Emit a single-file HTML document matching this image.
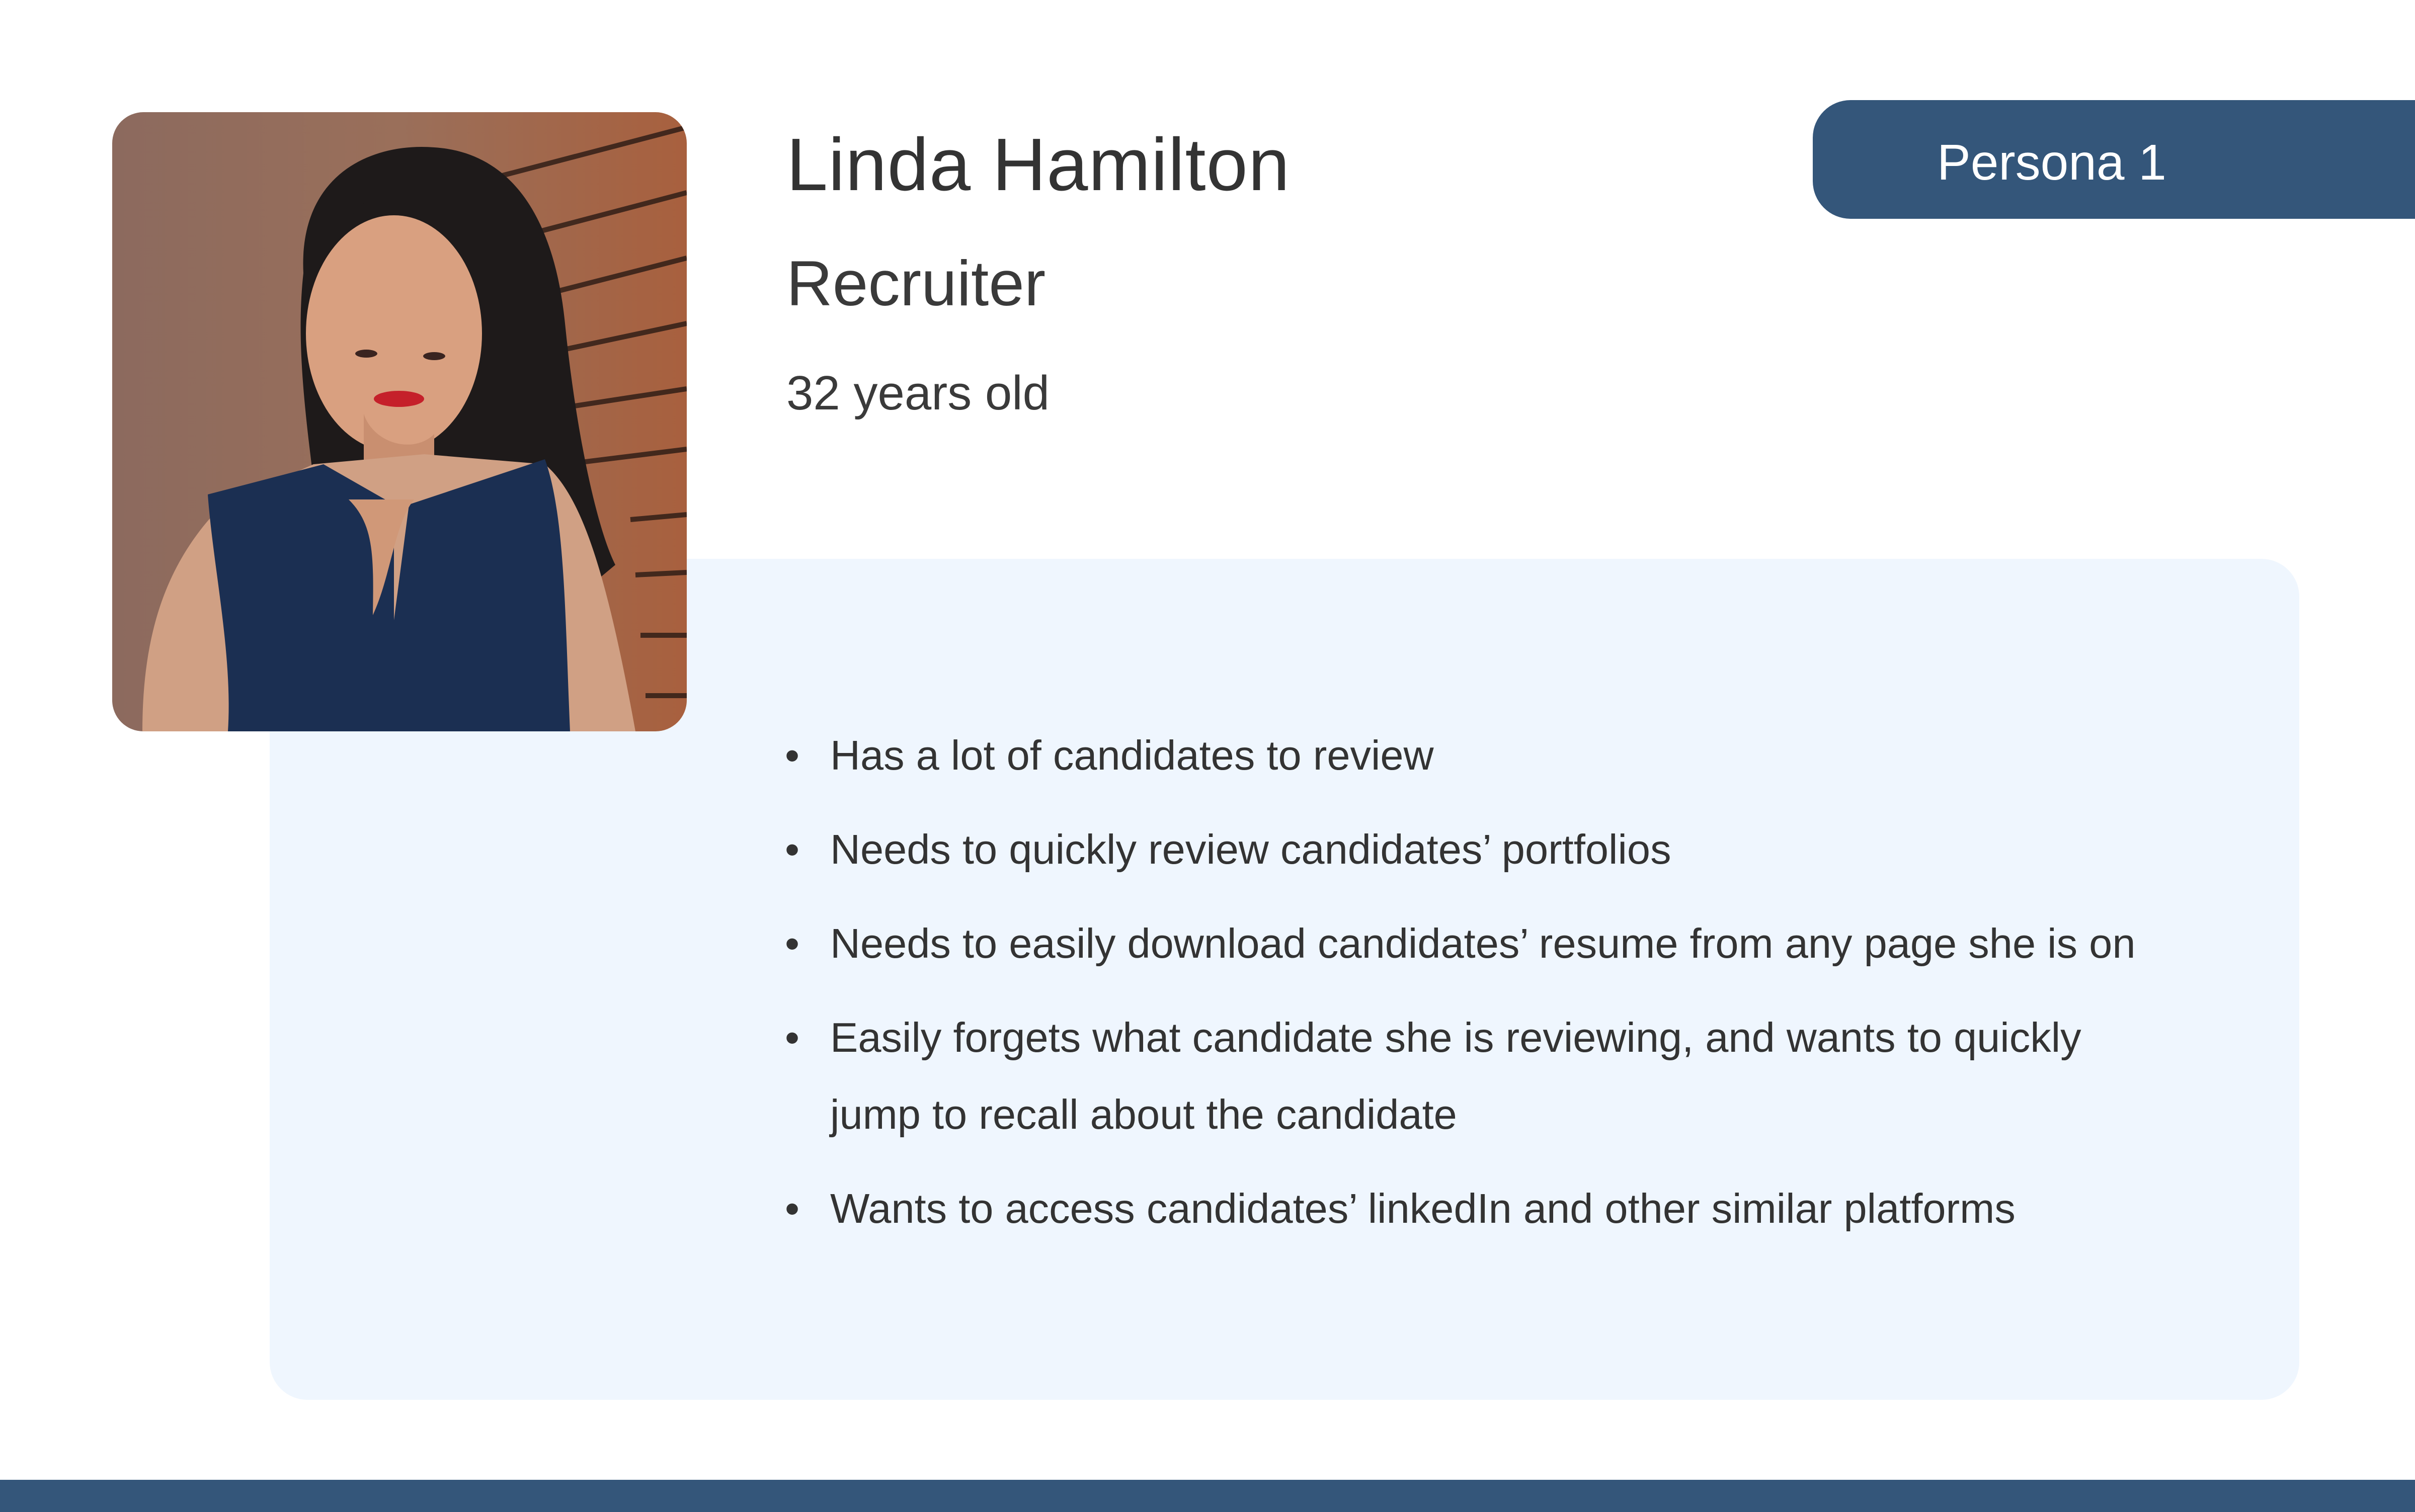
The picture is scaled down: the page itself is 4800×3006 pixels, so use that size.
<!DOCTYPE html>
<html><head><meta charset="utf-8"><style>
html,body{margin:0;padding:0;}
body{width:4800px;height:3006px;background:#fff;position:relative;overflow:hidden;font-family:"Liberation Sans",sans-serif;color:#333;}
.box{position:absolute;left:536px;top:1111px;width:4034px;height:1672px;background:#eff6fe;border-radius:75px;}
.photo{position:absolute;left:223px;top:223px;width:1142px;height:1231px;border-radius:62px;overflow:hidden;}
.name{position:absolute;left:1563px;top:254px;font-size:148px;line-height:1;color:#333;letter-spacing:1px;}
.role{position:absolute;left:1563px;top:500px;font-size:127px;line-height:1;color:#3a3a3a;}
.age{position:absolute;left:1563px;top:734px;font-size:96px;line-height:1;color:#3a3a3a;}
.badge{position:absolute;left:3603px;top:199px;width:1197px;height:236px;background:#34567a;border-radius:75px 0 0 75px;color:#fff;font-size:100px;line-height:248px;text-indent:247px;}
ul{position:absolute;left:1560px;top:1425px;margin:0;padding:0;list-style:none;font-size:83px;color:#333;}
li{position:relative;padding-left:90px;line-height:153px;white-space:nowrap;margin-bottom:34px;}
li:before{content:"•";position:absolute;left:0;top:0;}
.bar{position:absolute;left:0;top:2942px;width:4800px;height:64px;background:#34567a;}
</style></head><body>
<div class="box"></div>
<div class="photo">
<svg width="1142" height="1231" viewBox="0 0 1142 1231">
<defs>
<linearGradient id="bg" x1="0" y1="0" x2="1" y2="0">
<stop offset="0" stop-color="#8c6a5e"/><stop offset="0.5" stop-color="#9a6f5a"/><stop offset="1" stop-color="#a8603e"/>
</linearGradient>
</defs>
<rect width="1142" height="1231" fill="url(#bg)"/>
<g stroke="#2a1a14" stroke-width="10" opacity="0.8">
<line x1="760" y1="130" x2="1142" y2="30"/><line x1="800" y1="250" x2="1142" y2="160"/>
<line x1="830" y1="370" x2="1142" y2="290"/><line x1="860" y1="480" x2="1142" y2="420"/>
<line x1="880" y1="590" x2="1142" y2="550"/><line x1="900" y1="700" x2="1142" y2="670"/>
<line x1="1030" y1="810" x2="1142" y2="800"/><line x1="1040" y1="920" x2="1142" y2="915"/>
<line x1="1050" y1="1040" x2="1142" y2="1040"/><line x1="1060" y1="1160" x2="1142" y2="1160"/>
</g>
<path d="M380 320 C370 120 520 60 640 70 C800 80 880 220 900 420 C920 620 960 820 1000 900 L880 1000 L420 900 C400 700 360 500 380 320Z" fill="#1e1a1a"/>
<ellipse cx="560" cy="440" rx="175" ry="235" fill="#d9a080"/>
<path d="M430 280 C470 200 600 150 730 260 L720 180 C640 110 500 120 430 280Z" fill="#1e1a1a"/>
<path d="M500 600 C520 660 600 680 640 640 L640 760 L500 760Z" fill="#c98f70"/>
<path d="M60 1231 C60 1050 100 900 220 780 L400 700 L620 680 L860 700 C930 760 980 900 1040 1231Z" fill="#d0a084"/>
<path d="M190 760 L420 700 L560 780 L560 1010 L590 780 L860 690 C900 800 900 1000 910 1231 L230 1231 C240 1080 200 900 190 760Z" fill="#1b2f52"/>
<path d="M470 770 C520 820 520 880 518 1000 C555 920 560 820 600 770Z" fill="#d09878"/>
<ellipse cx="570" cy="570" rx="50" ry="16" fill="#c5202a"/>
<ellipse cx="505" cy="480" rx="22" ry="8" fill="#3a2420"/><ellipse cx="640" cy="485" rx="22" ry="8" fill="#3a2420"/>
</svg>
</div>
<div class="name">Linda Hamilton</div>
<div class="role">Recruiter</div>
<div class="age">32 years old</div>
<div class="badge">Persona 1</div>
<ul>
<li>Has a lot of candidates to review</li>
<li>Needs to quickly review candidates’ portfolios</li>
<li>Needs to easily download candidates’ resume from any page she is on</li>
<li>Easily forgets what candidate she is reviewing, and wants to quickly<br>jump to recall about the candidate</li>
<li>Wants to access candidates’ linkedIn and other similar platforms</li>
</ul>
<div class="bar"></div>
</body></html>
